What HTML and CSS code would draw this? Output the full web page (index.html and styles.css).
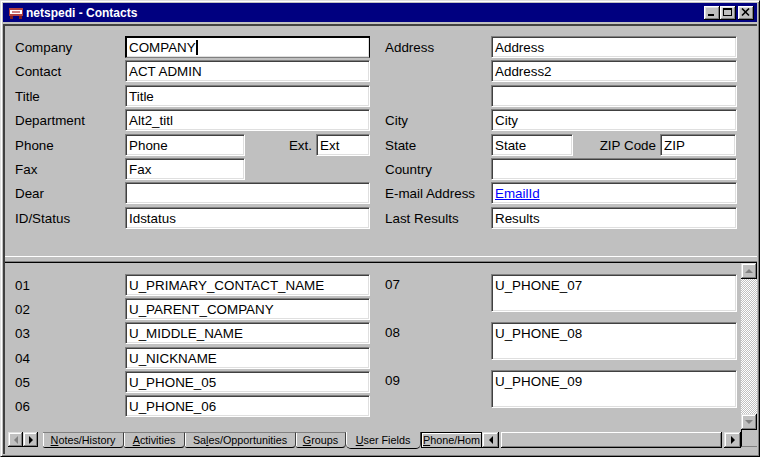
FILE: index.html
```html
<!DOCTYPE html>
<html lang="en">
<head>
    <meta charset="UTF-8">
    <title>netspedi - Contacts</title>
    <link rel="stylesheet" href="styles.css">
</head>
<body>
<div class="window">
    <div class="titlebar">
        <svg class="title-icon" viewBox="0 0 14 12" width="14" height="12">
            <rect x="0" y="1" width="14" height="8" fill="#b04040"/>
            <rect x="1" y="3" width="12" height="4" fill="#fff"/>
            <rect x="3" y="4" width="8" height="2" fill="#d08080"/>
            <rect x="1" y="9" width="3" height="3" fill="#802020"/>
            <rect x="10" y="9" width="3" height="3" fill="#802020"/>
        </svg>
        <span class="title-text">netspedi - Contacts</span>
        <div class="caption-btn">
            <svg viewBox="0 0 10 9" width="10" height="9"><rect x="1" y="6" width="6" height="2" fill="#000"/></svg>
        </div>
        <div class="caption-btn">
            <svg viewBox="0 0 10 9" width="10" height="9"><rect x="0.5" y="0.5" width="8" height="7" fill="none" stroke="#000"/><rect x="0" y="0" width="9" height="2" fill="#000"/></svg>
        </div>
        <div class="caption-btn close">
            <svg viewBox="0 0 10 9" width="10" height="9"><path d="M1 0.5 L8 7.5 M8 0.5 L1 7.5" stroke="#000" stroke-width="1.6"/></svg>
        </div>
    </div>

    <div class="client">
        <!-- contact fields -->
        <div class="pane-top">
            <span class="lbl">Company</span>
            <div class="edit focus">COMPANY<span class="caret"></span></div>
            <span class="lbl">Address</span>
            <div class="edit">Address</div>

            <span class="lbl">Contact</span>
            <div class="edit">ACT ADMIN</div>
            <span class="lbl"></span>
            <div class="edit">Address2</div>

            <span class="lbl">Title</span>
            <div class="edit">Title</div>
            <span class="lbl"></span>
            <div class="edit"></div>

            <span class="lbl">Department</span>
            <div class="edit">Alt2_titl</div>
            <span class="lbl">City</span>
            <div class="edit">City</div>

            <span class="lbl">Phone</span>
            <div class="split">
                <div class="edit phone">Phone</div>
                <span class="sublbl">Ext.</span>
                <div class="edit ext">Ext</div>
            </div>
            <span class="lbl">State</span>
            <div class="split">
                <div class="edit state">State</div>
                <span class="sublbl">ZIP Code</span>
                <div class="edit zip">ZIP</div>
            </div>

            <span class="lbl">Fax</span>
            <div class="split">
                <div class="edit phone">Fax</div>
            </div>
            <span class="lbl">Country</span>
            <div class="edit"></div>

            <span class="lbl">Dear</span>
            <div class="edit"></div>
            <span class="lbl">E-mail Address</span>
            <div class="edit"><a class="mail" href="#">EmailId</a></div>

            <span class="lbl">ID/Status</span>
            <div class="edit">Idstatus</div>
            <span class="lbl">Last Results</span>
            <div class="edit">Results</div>
        </div>

        <div class="splitter"></div>

        <!-- user fields tab -->
        <div class="pane-bottom">
            <div class="user-fields">
                <div class="uf-left">
                    <span class="lbl">01</span><div class="edit">U_PRIMARY_CONTACT_NAME</div>
                    <span class="lbl">02</span><div class="edit">U_PARENT_COMPANY</div>
                    <span class="lbl">03</span><div class="edit">U_MIDDLE_NAME</div>
                    <span class="lbl">04</span><div class="edit">U_NICKNAME</div>
                    <span class="lbl">05</span><div class="edit">U_PHONE_05</div>
                    <span class="lbl">06</span><div class="edit">U_PHONE_06</div>
                </div>
                <div class="uf-right">
                    <span class="lbl top">07</span><div class="edit multi">U_PHONE_07</div>
                    <span class="lbl top">08</span><div class="edit multi">U_PHONE_08</div>
                    <span class="lbl top">09</span><div class="edit multi">U_PHONE_09</div>
                </div>
            </div>
            <div class="vscroll">
                <div class="sb-btn">
                    <svg viewBox="0 0 8 5" width="8" height="5"><polygon points="0,4 4,0 8,4" fill="#808080"/></svg>
                </div>
                <div class="sb-track"></div>
                <div class="sb-btn">
                    <svg viewBox="0 0 8 5" width="8" height="5"><polygon points="0,0 8,0 4,4" fill="#808080"/></svg>
                </div>
            </div>
        </div>

        <div class="tabbar">
            <div class="tab-nav">
                <div class="sb-btn small">
                    <svg viewBox="0 0 4 8" width="4" height="8"><polygon points="4,0 0,4 4,8" fill="#808080"/></svg>
                </div>
                <div class="sb-btn small">
                    <svg viewBox="0 0 4 8" width="4" height="8"><polygon points="0,0 4,4 0,8" fill="#000"/></svg>
                </div>
            </div>
            <div class="tabs">
                <div class="tab" style="width:81px"><u>N</u>otes/History</div>
                <div class="tab" style="width:61px"><u>A</u>ctivities</div>
                <div class="tab" style="width:111px">Sa<u>l</u>es/Opportunities</div>
                <div class="tab" style="width:50px"><u>G</u>roups</div>
                <div class="tab active" style="width:75px"><u>U</u>ser Fields</div>
                <div class="tab last" style="width:61px"><u>P</u>hone/Hom</div>
            </div>
            <div class="hscroll">
                <div class="sb-btn arrow">
                    <svg viewBox="0 0 4 8" width="4" height="8"><polygon points="4,0 0,4 4,8" fill="#000"/></svg>
                </div>
                <div class="sb-thumb"></div>
                <div class="sb-btn arrow">
                    <svg viewBox="0 0 4 8" width="4" height="8"><polygon points="0,0 4,4 0,8" fill="#000"/></svg>
                </div>
            </div>
            <div class="corner"></div>
        </div>
    </div>
</div>
</body>
</html>
```

FILE: styles.css
```css
body {
    margin: 0;
    font-family: "Liberation Sans", Arial, sans-serif;
    font-size: 13.4px;
    color: #000;
    background: #c0c0c0;
}
.window {
    box-sizing: border-box;
    width: 760px;
    height: 457px;
    background: #c0c0c0;
    border: 1px solid;
    border-color: #dfdfdf #000 #000 #dfdfdf;
    box-shadow: inset 1px 1px #fff, inset -1px -1px #808080;
    padding: 2px;
    display: flex;
    flex-direction: column;
    overflow: hidden;
}
.titlebar {
    flex: none;
    height: 19px;
    background: #000080;
    color: #fff;
    display: flex;
    align-items: center;
    padding: 0 3px 0 6px;
}
.title-icon {
    margin-right: 3px;
}
.title-text {
    flex: 1;
    font-weight: bold;
    font-size: 12px;
}
.caption-btn {
    width: 16px;
    height: 14px;
    background: #c0c0c0;
    box-shadow: inset -1px -1px #000, inset 1px 1px #fff, inset -2px -2px #808080, inset 2px 2px #dfdfdf;
    display: flex;
    align-items: center;
    justify-content: center;
}
.caption-btn.close {
    margin-left: 2px;
}
.client {
    flex: 1;
    margin-top: 2px;
    border-top: 2px solid #404040;
    border-left: 2px solid #404040;
    display: flex;
    flex-direction: column;
}

/* top pane */
.pane-top {
    box-sizing: border-box;
    height: 230px;
    flex: none;
    padding: 10px 0 0 10px;
    display: grid;
    grid-template-columns: 110px 260px 106px 246px;
    grid-auto-rows: 22px;
    row-gap: 2.4px;
}
.pane-top > .edit {
    width: 245px;
}
.pane-top > .edit:nth-child(4n) {
    width: 246px;
}
.lbl {
    align-self: center;
    white-space: nowrap;
    padding-top: 1px;
}
.lbl.top {
    align-self: start;
    padding-top: 3px;
}
.edit {
    box-sizing: border-box;
    height: 22px;
    background: #fff;
    border: 1px solid;
    border-color: #808080 #fff #fff #808080;
    box-shadow: inset 1px 1px #404040, inset -1px -1px #dfdfdf;
    padding: 1px 2px 0 3px;
    line-height: 20px;
    white-space: nowrap;
    overflow: hidden;
}
.edit.focus {
    border-color: #000 #000 #808080 #000;
    box-shadow: inset 1px 1px #000, inset -1px -1px #dfdfdf;
}
.caret {
    display: inline-block;
    width: 2px;
    height: 15px;
    background: #000;
    vertical-align: -3px;
}
.split {
    display: flex;
    align-items: center;
    width: 245px;
}
.split .sublbl {
    flex: 1;
    text-align: right;
    padding-right: 4px;
    padding-top: 1px;
    white-space: nowrap;
}
.edit.phone {
    width: 120px;
}
.edit.ext {
    width: 54px;
}
.edit.state {
    width: 82px;
}
.edit.zip {
    width: 76px;
}
.mail {
    color: #0000ff;
    text-decoration: underline;
}

.splitter {
    box-sizing: border-box;
    height: 6px;
    flex: none;
    border-top: 1px solid #fff;
    border-bottom: 1px solid #808080;
}

/* bottom pane */
.pane-bottom {
    box-sizing: border-box;
    height: 168px;
    flex: none;
    border-top: 1px solid #000;
    display: flex;
}
.user-fields {
    flex: 1;
    padding: 11px 0 0 10px;
    display: flex;
}
.uf-left {
    display: grid;
    grid-template-columns: 110px 245px;
    grid-auto-rows: 22px;
    row-gap: 2.2px;
    margin-right: 15px;
}
.uf-right {
    display: grid;
    grid-template-columns: 106px 246px;
    grid-auto-rows: 38px;
    row-gap: 10px;
}
.edit.multi {
    height: 38px;
    line-height: 20px;
}
.vscroll {
    width: 16px;
    display: flex;
    flex-direction: column;
}
.sb-btn {
    flex: none;
    width: 16px;
    height: 16px;
    box-sizing: border-box;
    background: #c0c0c0;
    box-shadow: inset -1px -1px #000, inset 1px 1px #dfdfdf, inset -2px -2px #808080, inset 2px 2px #fff;
    display: flex;
    align-items: center;
    justify-content: center;
}
.sb-track {
    flex: 1;
    background: repeating-conic-gradient(#c0c0c0 0 25%, #fff 0 50%) 0 0 / 2px 2px;
}

/* sheet tabs */
.tabbar {
    box-sizing: border-box;
    height: 21px;
    flex: none;
    display: flex;
    align-items: flex-start;
    padding: 2px 0 0 3px;
}
.tab-nav {
    display: flex;
    margin-right: 5px;
}
.sb-btn.small {
    width: 15px;
    height: 15px;
}
.tabs {
    display: flex;
    width: 439px;
    overflow: hidden;
}
.tab {
    flex: none;
    box-sizing: border-box;
    height: 16px;
    font-size: 10.8px;
    line-height: 14px;
    text-align: center;
    white-space: nowrap;
    overflow: hidden;
    border-top: 1px solid #808080;
    border-right: 1px solid #404040;
    border-bottom: 1px solid #000;
    border-bottom-right-radius: 4px;
    border-bottom-left-radius: 2px;
    box-shadow: inset 1px 0 #fff;
}
.tab.active {
    height: 19px;
    margin-top: -2px;
    padding-top: 3px;
    border-top: none;
    border-bottom-right-radius: 5px;
    border-bottom-left-radius: 5px;
}
.tab.last {
    border: 1px solid #000;
    border-radius: 0;
    text-align: left;
    padding-left: 1px;
    box-shadow: inset 1px 1px #fff;
}
.hscroll {
    width: 259px;
    display: flex;
}
.sb-btn.arrow {
    width: 17px;
}
.sb-thumb {
    flex: 1;
    height: 16px;
    margin: 0 2px;
    background: #c0c0c0;
    box-shadow: inset -1px -1px #000, inset 1px 1px #fff, inset -2px -2px #808080;
}
.corner {
    width: 16px;
    height: 17px;
    border-left: 1px solid #000;
    border-bottom: 1px solid #808080;
    box-sizing: border-box;
    margin-top: -2px;
}
```
